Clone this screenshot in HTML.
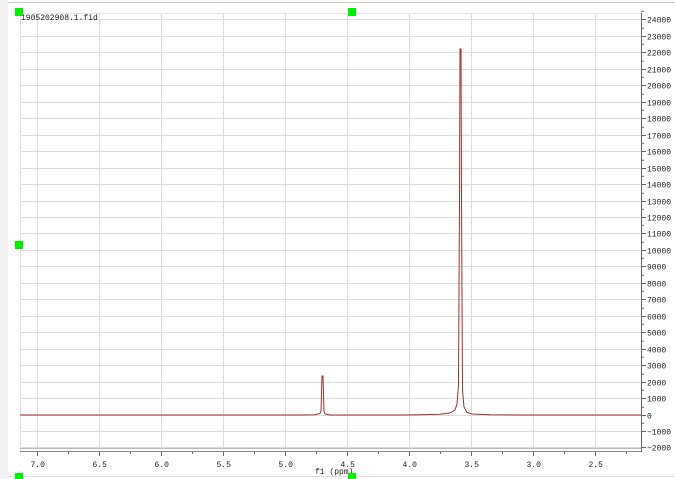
<!DOCTYPE html>
<html><head><style>
html,body{margin:0;padding:0;background:#fff;width:675px;height:479px;overflow:hidden}
svg{display:block}
text{font-family:"Liberation Mono",monospace;font-size:8px;fill:#222}
</style></head><body>
<svg width="675" height="479" xmlns="http://www.w3.org/2000/svg">
<rect x="0" y="0" width="675" height="479" fill="#fff"/>
<rect x="0" y="0" width="8" height="479" fill="#f0f0f0"/>
<line x1="8" y1="2.5" x2="675" y2="2.5" stroke="#c8c8c8"/>
<line x1="8" y1="476.5" x2="675" y2="476.5" stroke="#e0e0e0"/>
<g stroke="#dcdcdc" stroke-width="1">
<line x1="37.5" y1="13" x2="37.5" y2="449"/><line x1="99.5" y1="13" x2="99.5" y2="449"/><line x1="161.5" y1="13" x2="161.5" y2="449"/><line x1="223.5" y1="13" x2="223.5" y2="449"/><line x1="285.5" y1="13" x2="285.5" y2="449"/><line x1="347.5" y1="13" x2="347.5" y2="449"/><line x1="409.5" y1="13" x2="409.5" y2="449"/><line x1="471.5" y1="13" x2="471.5" y2="449"/><line x1="533.5" y1="13" x2="533.5" y2="449"/><line x1="595.5" y1="13" x2="595.5" y2="449"/>
</g>
<g id="hg" stroke="#dcdcdc"></g>
<line x1="20" y1="13.5" x2="641" y2="13.5" stroke="#e4e4e4"/>
<line x1="20.5" y1="13" x2="20.5" y2="452" stroke="#dcdcdc"/>
<line x1="20" y1="448.5" x2="641" y2="448.5" stroke="#bbb"/>
<line x1="20" y1="451.5" x2="641" y2="451.5" stroke="#888"/>
<line x1="641.5" y1="13" x2="641.5" y2="452" stroke="#666"/>
<g id="ax"></g>
<text x="21" y="20">1905202908.1.fid</text>
<polyline fill="none" stroke="#a03030" stroke-width="1" points="20,415 300,415 315,414.7 320,413.5 321,411 322,376 323,376 324,411 325,414 330,415 400,415 420,414.7 440,414.2 450,413 455,410 457,404 458.5,385 459.5,200 460,49 461,49 461.5,200 462.5,390 464,407 467,412.5 472,414 490,414.7 520,415 641,415"/>
<text x="315" y="474">f1 (ppm)</text>
<g fill="#00ee00">
<rect x="15" y="8" width="8" height="8"/><rect x="348" y="8" width="8" height="8"/><rect x="15" y="241" width="8" height="8"/><rect x="15" y="473" width="8" height="8"/><rect x="348" y="473" width="8" height="8"/>
</g>
</svg>
<script>
var ns="http://www.w3.org/2000/svg",hg=document.getElementById('hg'),ax=document.getElementById('ax');
function el(t,a,p,txt){var e=document.createElementNS(ns,t);for(var k in a)e.setAttribute(k,a[k]);if(txt)e.textContent=txt;p.appendChild(e);}
for(var v=24;v>=-2;v--){var y=414.5-v*16.46;y=Math.round(y)+0.5;
el('line',{x1:20,y1:y,x2:641,y2:y},hg);
el('line',{x1:641,y1:y,x2:646,y2:y,stroke:'#666'},ax);
if(v>-2)el('line',{x1:641,y1:y-8.23,x2:644,y2:y-8.23,stroke:'#666'},ax);
el('text',{x:647,y:y+3},ax,v==0?'0':(v<0?'\u2212'+(-v*1000):String(v*1000)));}
var labs=['7.0','6.5','6.0','5.5','5.0','4.5','4.0','3.5','3.0','2.5'];
for(var i=0;i<10;i++){var x=37.5+62*i;el('line',{x1:x,y1:452,x2:x,y2:456,stroke:'#666'},ax);
el('line',{x1:x+31,y1:452,x2:x+31,y2:454,stroke:'#666'},ax);
el('text',{x:x-7,y:467},ax,labs[i]);}
</script>
</body></html>
